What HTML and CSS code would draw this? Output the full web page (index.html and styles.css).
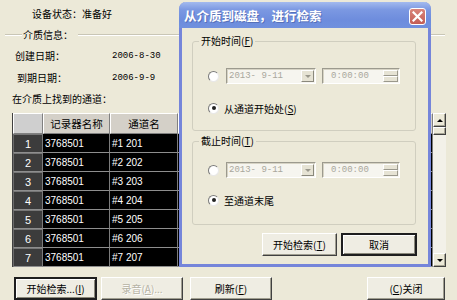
FILE: index.html
```html
<!DOCTYPE html>
<html lang="zh-CN">
<head>
  <meta charset="UTF-8">
  <title>介质检索</title>
  <link rel="stylesheet" href="styles.css">
</head>
<body>
  <div class="window">
    <div class="row status"><span class="status-lbl">设备状态：</span><span>准备好</span></div>
    <div class="row section"><span class="section-title">介质信息：</span></div>
    <div class="row info"><span class="info-lbl">创建日期：</span><span class="info-val">2006-8-30</span></div>
    <div class="row info expire"><span class="info-lbl lbl-indent">到期日期：</span><span class="info-val">2006-9-9</span></div>
    <div class="row found">在介质上找到的通道：</div>

    <div class="grid-wrap">
      <table class="grid">
        <colgroup>
          <col class="c-num"><col class="c-rec"><col class="c-chan"><col>
        </colgroup>
        <tr class="head">
          <th class="corner"></th><th>记录器名称</th><th>通道名</th><th></th>
        </tr>
        <tr><td class="num">1</td><td>3768501</td><td>#1 201</td><td></td></tr>
        <tr><td class="num">2</td><td>3768501</td><td>#2 202</td><td></td></tr>
        <tr><td class="num">3</td><td>3768501</td><td>#3 203</td><td></td></tr>
        <tr><td class="num">4</td><td>3768501</td><td>#4 204</td><td></td></tr>
        <tr><td class="num">5</td><td>3768501</td><td>#5 205</td><td></td></tr>
        <tr><td class="num">6</td><td>3768501</td><td>#6 206</td><td></td></tr>
        <tr><td class="num">7</td><td>3768501</td><td>#7 207</td><td></td></tr>
      </table>
      <div class="vscroll">
        <div class="sb-btn"><span class="arrow-up"></span></div>
        <div class="sb-thumb"></div>
        <div class="sb-track"></div>
        <div class="sb-btn"><span class="arrow-down"></span></div>
      </div>
    </div>

    <div class="actions">
      <button class="btn btn-default w83">开始检索...(<u>I</u>)</button>
      <button class="btn w82" disabled>录音(<u>A</u>)...</button>
      <button class="btn w82 gap-wide">刷新(<u>F</u>)</button>
      <span class="spacer"></span>
      <button class="btn w78">(<u>C</u>)关闭</button>
    </div>

    <div class="dialog">
      <div class="dlg-title">
        <span>从介质到磁盘，进行检索</span>
        <span class="dlg-close">
          <svg width="11" height="11" viewBox="0 0 11 11"><path d="M1.5 1.5 L9.5 9.5 M9.5 1.5 L1.5 9.5" stroke="#fff" stroke-width="2.2" stroke-linecap="square"/></svg>
        </span>
      </div>
      <div class="dlg-body">
        <fieldset class="range">
          <legend>开始时间(<u>F</u>)</legend>
          <div class="pick-row">
            <span class="radio"></span>
            <div class="datebox"><span>2013- 9-11</span><span class="drop"><span class="arrow-down"></span></span></div>
            <div class="timebox"><span>0:00:00</span><span class="spin"><span></span><span></span></span></div>
          </div>
          <div class="opt-row"><span class="radio on"></span>从通道开始处(<u>S</u>)</div>
        </fieldset>
        <fieldset class="range range-end">
          <legend>截止时间(<u>T</u>)</legend>
          <div class="pick-row">
            <span class="radio"></span>
            <div class="datebox"><span>2013- 9-11</span><span class="drop"><span class="arrow-down"></span></span></div>
            <div class="timebox"><span>0:00:00</span><span class="spin"><span></span><span></span></span></div>
          </div>
          <div class="opt-row"><span class="radio on"></span>至通道末尾</div>
        </fieldset>
        <div class="dlg-actions">
          <button class="btn w75">开始检索(<u>T</u>)</button>
          <button class="btn btn-default w76">取消</button>
        </div>
      </div>
    </div>
  </div>
</body>
</html>
```

FILE: styles.css
```css
body {
  margin: 0;
  width: 457px;
  height: 300px;
  overflow: hidden;
  background: #ece9d8;
  color: #000;
  font-family: "Noto Sans CJK SC", "Liberation Sans", sans-serif;
  font-size: 10px;
}
.window {
  position: relative;
  display: flow-root;
  height: 300px;
}
.row {
  margin-top: 7px;
  height: 14px;
  line-height: 14px;
  white-space: nowrap;
}
.status {
  padding-left: 32px;
}
.section {
  display: flex;
  align-items: center;
  padding: 0 12px 0 5px;
}
.section::before,
.section::after {
  content: "";
  border-top: 1px solid #c9c6b6;
  border-bottom: 1px solid #fff;
}
.section::before {
  width: 17px;
}
.section::after {
  flex: 1;
}
.section-title {
  padding: 0 5px 0 1px;
}
.info {
  display: flex;
}
.info-lbl {
  width: 97px;
  padding-left: 15px;
}
.lbl-indent {
  padding-left: 17px;
  width: 95px;
}
.info-val {
  font-family: "Liberation Mono", monospace;
  font-size: 9px;
}
.expire {
  margin-top: 8px;
}
.found {
  padding-left: 12px;
}

/* channel grid */
.grid-wrap {
  display: flex;
  margin: 7px 0 0 12px;
  width: 434px;
  height: 154px;
}
.grid {
  width: 421px;
  border-collapse: separate;
  border-spacing: 0;
  table-layout: fixed;
  background: #000;
  border-left: 1px solid #404040;
  font-family: "Liberation Sans", sans-serif;
  font-size: 10px;
}
.c-num { width: 30px; }
.c-rec { width: 67px; }
.c-chan { width: 68px; }
.grid tr {
  height: 19px;
}
.grid tr.head {
  height: 21px;
}
.grid th {
  padding: 0;
  background: #d4d0c8;
  border-top: 1px solid #fff;
  border-left: 1px solid #fff;
  border-right: 1px solid #808080;
  border-bottom: 1px solid #808080;
  font-family: "Noto Sans CJK SC", sans-serif;
  font-size: 10.5px;
  font-weight: normal;
}
.grid th.corner {
  background: #cfcfcf;
}
.grid td {
  padding: 0 0 0 2px;
  color: #fff;
  border-right: 1px solid #7c7c7c;
  border-bottom: 1px solid #8e8e8e;
  white-space: nowrap;
}
.grid td.num {
  padding: 0;
  text-align: center;
  background: #3c3c3c;
  border-top: 1px solid #777;
  border-left: 1px solid #6a6a6a;
  font-size: 11px;
}

.vscroll {
  width: 13px;
  display: flex;
  flex-direction: column;
  background: #f3f1e9;
}
.sb-btn,
.sb-thumb {
  box-sizing: border-box;
  background: #ece9d8;
  border: 1px solid;
  border-color: #fff #404040 #404040 #fff;
  box-shadow: inset -1px -1px #a7a595;
  display: flex;
  align-items: center;
  justify-content: center;
}
.sb-btn {
  height: 14px;
}
.sb-thumb {
  height: 8px;
}
.sb-track {
  flex: 1;
}
.arrow-up,
.arrow-down {
  width: 0;
  height: 0;
  border-left: 3px solid transparent;
  border-right: 3px solid transparent;
}
.arrow-up {
  border-bottom: 3px solid #000;
}
.arrow-down {
  border-top: 3px solid #000;
}

/* buttons */
.btn {
  box-sizing: border-box;
  height: 23px;
  padding: 0;
  background: #efede3;
  border: 1px solid;
  border-color: #fff #404040 #404040 #fff;
  box-shadow: inset -1px -1px #a09e90;
  font-family: "Noto Sans CJK SC", sans-serif;
  font-size: 10px;
  color: #000;
}
.btn-default {
  border: 2px solid #1e1e1e;
  box-shadow: inset 1px 1px #fff, inset -1px -1px #8a887a;
}
.btn:disabled {
  color: #b5b2a4;
  text-shadow: 1px 1px #fff;
}
.w75 { width: 75px; }
.w76 { width: 76px; }
.w78 { width: 78px; }
.w82 { width: 82px; }
.w83 { width: 83px; }
.actions {
  display: flex;
  gap: 4px;
  margin-top: 10px;
  padding: 0 12px 0 14px;
}
.gap-wide {
  margin-left: 3px;
}
.spacer {
  flex: 1;
}

/* search dialog */
.dialog {
  position: absolute;
  left: 179px;
  top: 2px;
  width: 252px;
  height: 265px;
  box-sizing: border-box;
  border: 3px solid #7585da;
  border-top: 0;
  border-radius: 7px 7px 0 0;
  background: #ece9d8;
}
.dlg-title {
  display: flex;
  align-items: center;
  height: 26px;
  margin: 0 -3px;
  padding: 0 5px;
  border-radius: 7px 7px 0 0;
  background: linear-gradient(#a3baee, #7b98e2 30%, #6d8cdd 70%, #7090de);
  color: #fff;
  font-size: 12.5px;
  font-weight: bold;
  text-shadow: 1px 1px #5670b8;
  white-space: nowrap;
}
.dlg-close {
  margin: 2px 0 0 auto;
  width: 17px;
  height: 17px;
  box-sizing: border-box;
  border: 1px solid #fff;
  border-radius: 3px;
  background: linear-gradient(#d9847a, #c35e55);
  display: flex;
  align-items: center;
  justify-content: center;
}
.dlg-body {
  padding: 7px 12px 0 10px;
}
.range {
  margin: 0;
  padding: 0 0 15px 6px;
  border: 1px solid #d0cebf;
  border-radius: 3px;
  min-width: 0;
}
.range legend {
  padding: 0 2px;
  line-height: 12px;
}
.range-end {
  margin-top: 4px;
  padding-bottom: 17px;
}
.range-end .pick-row,
.range-end .opt-row {
  margin-top: 15px;
}
.pick-row {
  display: flex;
  align-items: center;
  height: 16px;
  margin: 21px 0 0 9px;
}
.opt-row {
  display: flex;
  align-items: center;
  height: 14px;
  margin: 17px 0 0 9px;
  white-space: nowrap;
}
.radio {
  position: relative;
  width: 11px;
  height: 11px;
  box-sizing: border-box;
  border-radius: 50%;
  border: 1px solid;
  border-color: #7a7a7a #e8e8e8 #e8e8e8 #7a7a7a;
  background: #fff;
  margin-right: 7px;
}
.opt-row .radio {
  margin-right: 5px;
}
.radio.on::after {
  content: "";
  position: absolute;
  left: 2.5px;
  top: 2.5px;
  width: 4px;
  height: 4px;
  border-radius: 50%;
  background: #222;
}
.datebox,
.timebox {
  box-sizing: border-box;
  display: flex;
  align-items: center;
  height: 16px;
  border: 1px solid;
  border-color: #9c9a8e #fff #fff #9c9a8e;
  box-shadow: inset 1px 1px #d6d3c4;
  background: #f6f5ef;
  color: #a9a79c;
  font-family: "Liberation Mono", monospace;
  font-size: 9px;
}
.datebox {
  width: 90px;
  padding: 0 1px 0 2px;
}
.timebox {
  width: 78px;
  margin-left: 6px;
  padding: 0 1px 0 8px;
}
.drop {
  margin-left: auto;
  width: 13px;
  height: 12px;
  box-sizing: border-box;
  border: 1px solid;
  border-color: #fff #8a887c #8a887c #fff;
  background: #e6e3d4;
  display: flex;
  align-items: center;
  justify-content: center;
}
.drop .arrow-down {
  border-top-color: #9a988c;
}
.spin {
  margin-left: auto;
  width: 15px;
  height: 12px;
  display: flex;
  flex-direction: column;
}
.spin span {
  flex: 1;
  border: 1px solid;
  border-color: #fff #9a988c #9a988c #fff;
  background: #e6e3d4;
}
.dlg-actions {
  display: flex;
  justify-content: flex-end;
  gap: 4px;
  margin: 8px -1px 0 0;
}
```
